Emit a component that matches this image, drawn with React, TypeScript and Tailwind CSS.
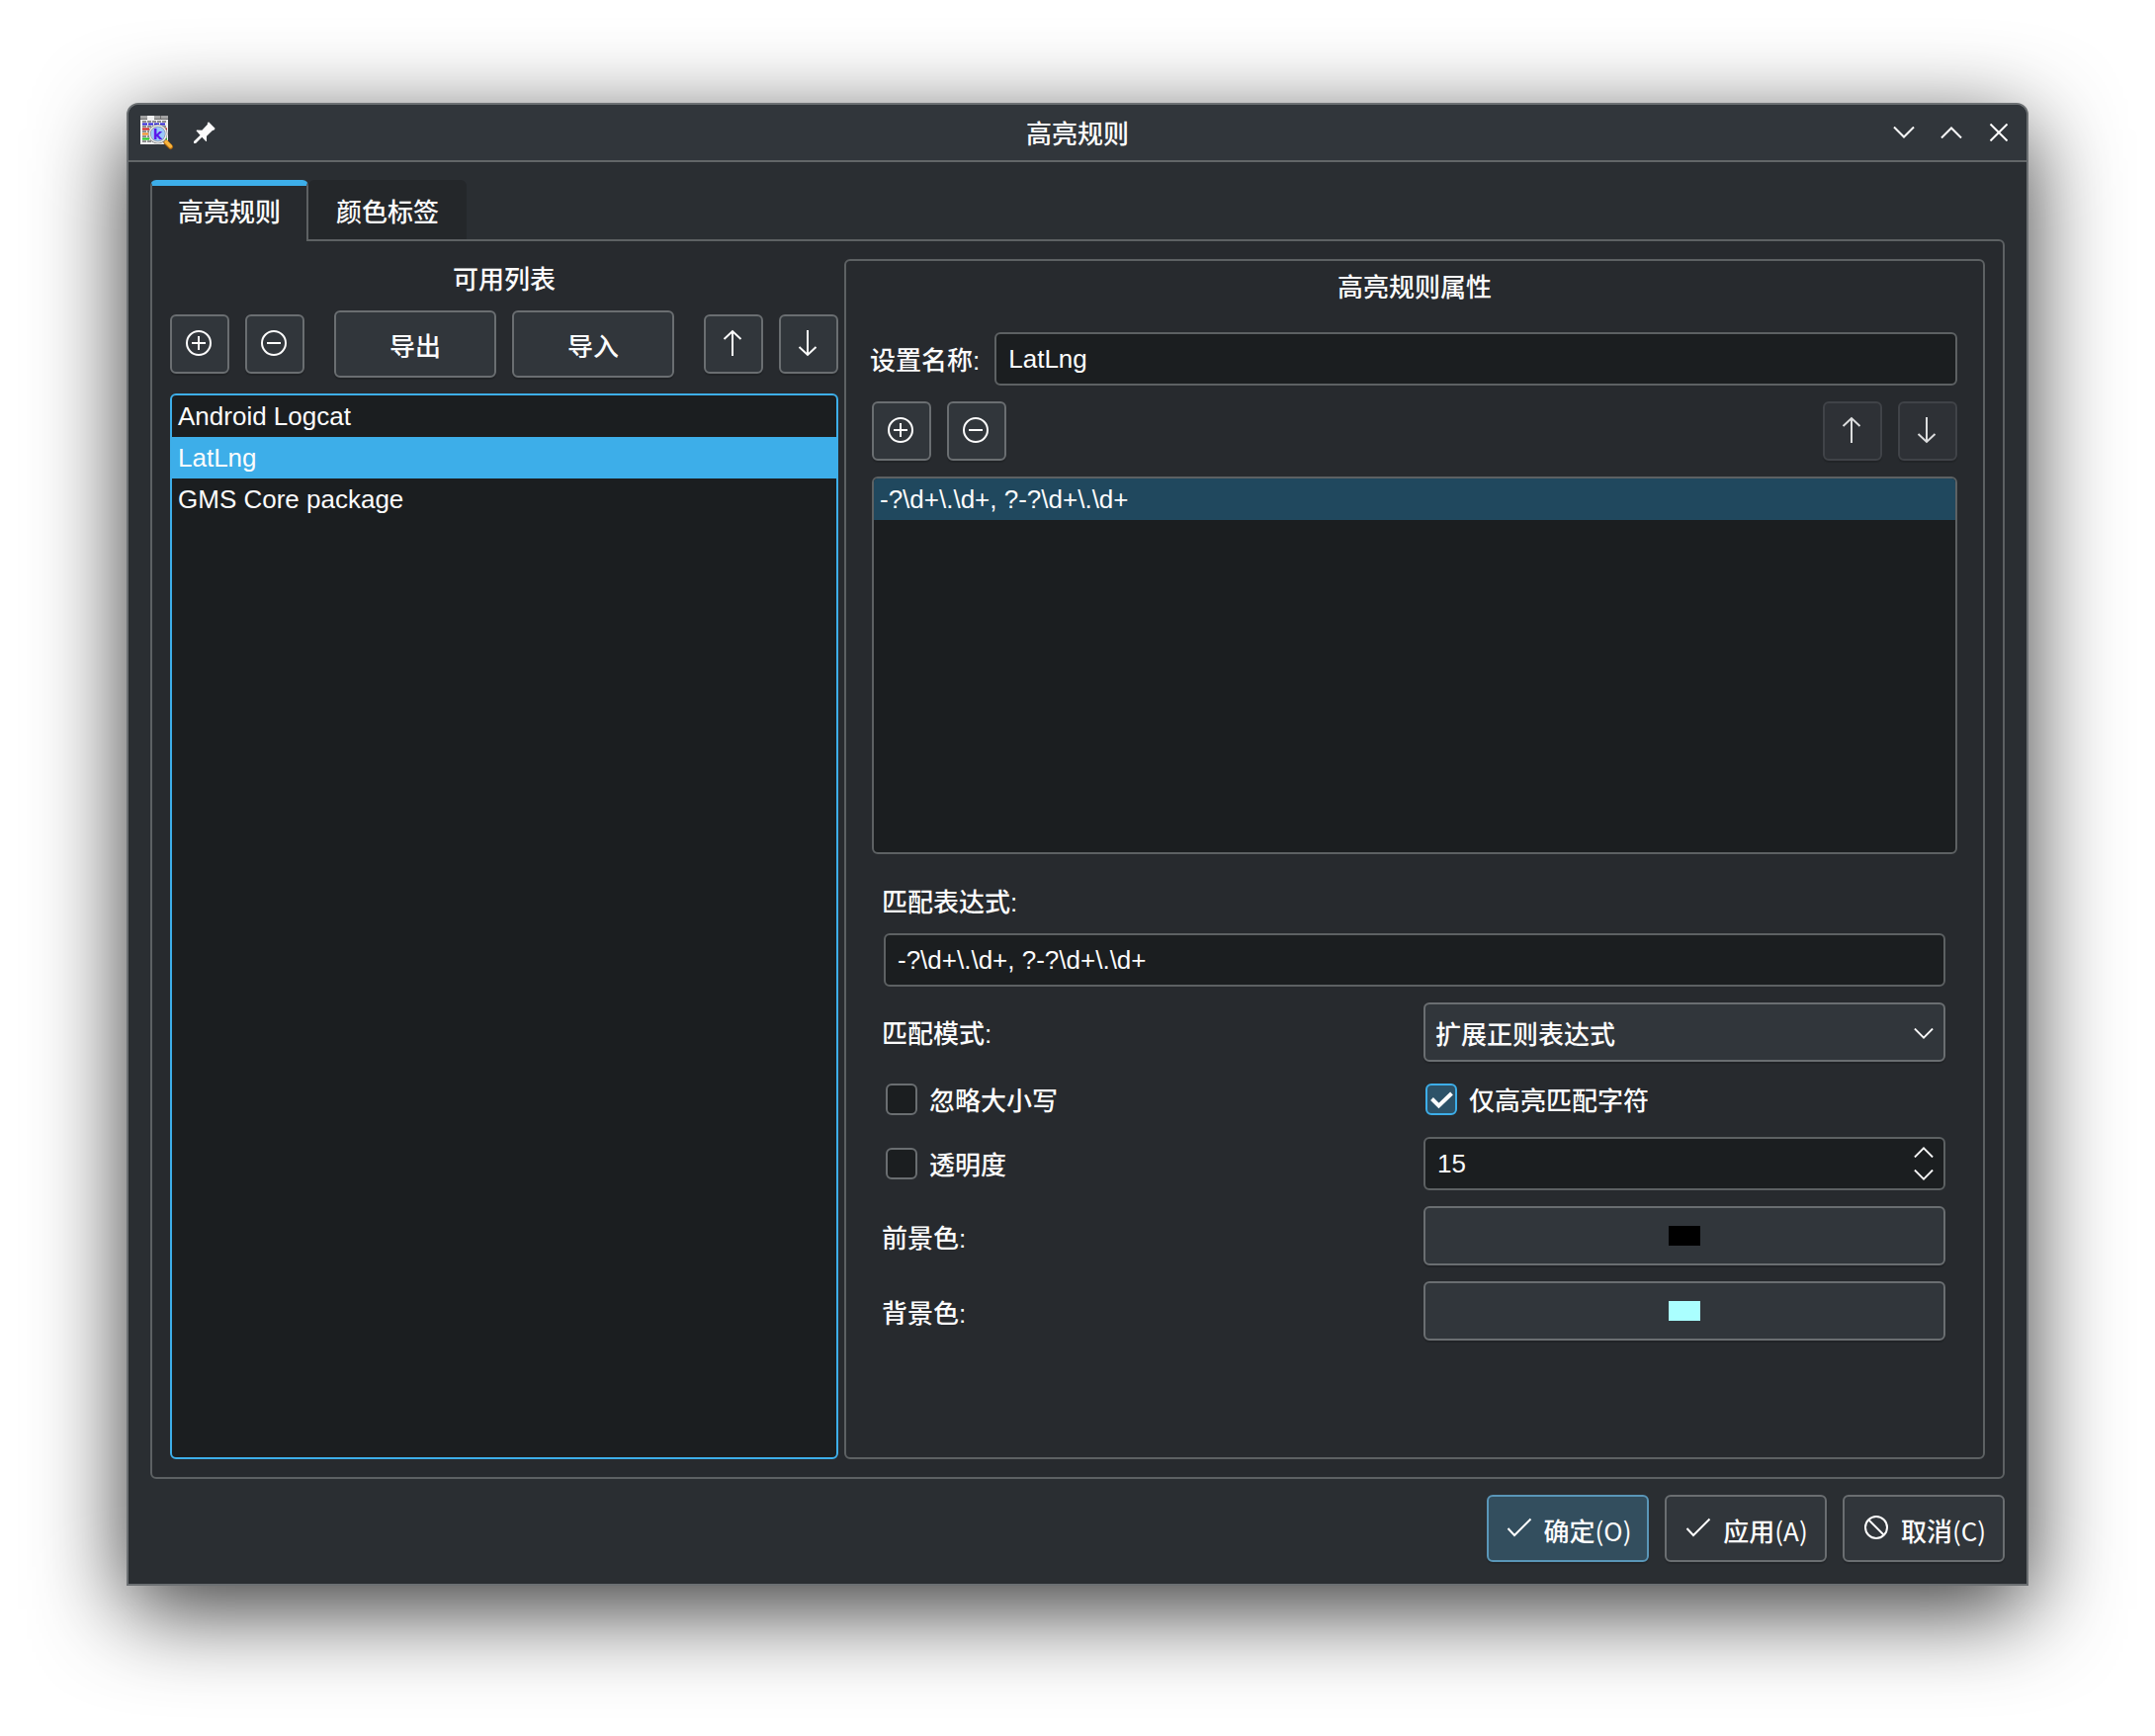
import { useState, type ReactNode } from "react";

const sets = ["Android Logcat", "LatLng", "GMS Core package"];
const pattern = "-?\\d+\\.\\d+, ?-?\\d+\\.\\d+";

type BtnProps = {
  children: ReactNode;
  label?: string;
  disabled?: boolean;
  onClick?: () => void;
};

const btnBase =
  "flex items-center justify-center rounded-md border-2 shadow-[0_2px_1px_rgba(0,0,0,0.15)]";

const IconButton = ({ children, label, disabled, onClick }: BtnProps) => (
  <button
    type="button"
    aria-label={label}
    disabled={disabled}
    onClick={onClick}
    className={`${btnBase} size-[60px] shrink-0 ${
      disabled
        ? "border-[#404348] bg-[#2e3136] text-[#dcddde]"
        : "border-[#6a6e71] bg-[#31363b] text-[#fcfcfc]"
    }`}
  >
    {children}
  </button>
);

const TextButton = ({ children, onClick }: BtnProps) => (
  <button
    type="button"
    onClick={onClick}
    className={`${btnBase} h-[68px] w-[164px] border-[#6a6e71] bg-[#31363b] pt-1.5`}
  >
    {children}
  </button>
);

const svgProps = {
  width: 32,
  height: 32,
  viewBox: "0 0 32 32",
  fill: "none",
  stroke: "currentColor",
  strokeWidth: 2,
  "aria-hidden": true,
};

const PlusIcon = () => (
  <svg {...svgProps}>
    <circle cx="15" cy="15" r="12" />
    <path d="M15 8v14M8 15h14" />
  </svg>
);

const MinusIcon = () => (
  <svg {...svgProps}>
    <circle cx="15" cy="15" r="12" />
    <path d="M8 15h14" />
  </svg>
);

const UpIcon = () => (
  <svg {...svgProps}>
    <path d="M15 28V3M6.500 11L15 3l8.500 8" />
  </svg>
);

const DownIcon = () => (
  <svg {...svgProps}>
    <path d="M15 2v25M6.500 19L15 27l8.500-8" />
  </svg>
);

const CheckIcon = () => (
  <svg {...svgProps}>
    <path d="M3.500 18l6.500 7L26.500 8.500" />
  </svg>
);

const CancelIcon = () => (
  <svg {...svgProps}>
    <circle cx="15" cy="17" r="11" />
    <path d="M7 9l16 16" />
  </svg>
);

const Chevron = ({ up = false, small = false }: { up?: boolean; small?: boolean }) => (
  <svg
    width={small ? 20 : 22}
    height={small ? 11 : 12}
    viewBox="0 0 22 12"
    fill="none"
    stroke="currentColor"
    strokeWidth="2"
    aria-hidden
  >
    <path d={up ? "M1 11.500L11 1.500l10 10" : "M1 0.500l10 10 10-10"} />
  </svg>
);

const AppIcon = () => (
  <svg width="36" height="36" viewBox="0 0 36 36" aria-hidden>
    <rect x="2" y="1" width="28" height="29" fill="#f1f1f1" />
    <path d="M2 1h7v4H2zM16 1h14v4H16z" fill="#a3a3a3" />
    <path d="M2 4.500h7M16 4.500h14M22.500 1v4" stroke="#6d6d6d" />
    <path
      d="M4 7h24M4 12h24M4 17h24M4 22h24M4 27h24"
      stroke="#6f6f6f"
      strokeWidth="1.500"
      strokeDasharray="4 1"
    />
    <path d="M4 9.500h24" stroke="#2b1fd6" strokeWidth="2" strokeDasharray="5 1" />
    <path d="M4 14.500h7M26 14.500h3" stroke="#d01818" strokeWidth="2" />
    <path d="M4 19.500h6" stroke="#f08a1c" strokeWidth="2" />
    <path d="M4 24.500h7M26 24.500h3" stroke="#18c81e" strokeWidth="2" />
    <path d="M28 28l4.500 4.500" stroke="#a8620c" strokeWidth="5" strokeLinecap="round" />
    <path d="M28 27.500l4.500 4.500" stroke="#f9b43c" strokeWidth="3.500" strokeLinecap="round" />
    <circle cx="19.700" cy="19.500" r="8.500" fill="#9cc9fa" stroke="#7c7c7c" strokeWidth="2.500" />
    <circle cx="19.700" cy="19.500" r="8.500" fill="none" stroke="#ececec" strokeWidth="1.500" />
    <text
      x="19.500"
      y="25"
      textAnchor="middle"
      fontFamily="DejaVu Sans"
      fontSize="14"
      fontWeight="700"
      fill="#5a17e8"
    >
      k
    </text>
  </svg>
);

const PinIcon = () => (
  <svg width="24" height="24" viewBox="0 -1 24 24" fill="#fcfcfc" aria-hidden>
    <path d="M15 .3L21.700 7 20 9l-.8-.2L13 14.700V20h-.7l-4-4.200L2 22H0v-2l6.500-6.200L2.500 9.200l.6-.7 5.200.2L14 2.800l-.3-1z" />
  </svg>
);

const Swatch = ({ id, color, onClick }: { id: string; color: string; onClick?: () => void }) => (
  <button
    id={id}
    type="button"
    onClick={onClick}
    className={`${btnBase} h-[60px] border-[#6a6e71] bg-[#31363b]`}
  >
    <span className="h-5 w-8" style={{ backgroundColor: color }} />
  </button>
);

type CheckProps = { label: string; checked: boolean; onChange: (v: boolean) => void };

const Check = ({ label, checked, onChange }: CheckProps) => (
  <label className="flex h-11 items-center gap-3 px-0.5">
    <span className="relative flex size-8">
      <input
        type="checkbox"
        checked={checked}
        onChange={(e) => onChange(e.target.checked)}
        className="size-8 appearance-none rounded-md border-2 border-[#6a6e71] bg-[#1b1e20] checked:border-[#3daee9] checked:bg-[#2d5268]"
      />
      {checked && (
        <svg
          className="pointer-events-none absolute inset-0"
          viewBox="0 0 32 32"
          fill="none"
          stroke="#fcfcfc"
          strokeWidth="4"
          aria-hidden
        >
          <path d="M6.500 15.500l7 7L26.500 10" />
        </svg>
      )}
    </span>
    <span className="pt-1">{label}</span>
  </label>
);

const App = () => {
  const [tab, setTab] = useState(0);
  const [selected, setSelected] = useState(1);
  const [name, setName] = useState("LatLng");
  const [expr, setExpr] = useState(pattern);
  const [ignoreCase, setIgnoreCase] = useState(false);
  const [onlyMatch, setOnlyMatch] = useState(true);
  const [opacity, setOpacity] = useState(false);
  const [level, setLevel] = useState(15);

  const field = "rounded-md border-2 border-[#5d6163] bg-[#1b1e20] outline-none";

  return (
    <div className="flex min-h-screen flex-col bg-white px-32 pt-[104px] pb-[152px] font-['Liberation_Sans','Noto_Sans_CJK_SC',sans-serif] text-[26px] leading-[38px] font-medium text-[#fcfcfc]">
      <main className="flex flex-1 flex-col rounded-t-xl border-2 border-[#6c7073] bg-[#2a2e32] shadow-[0_24px_92px_rgba(0,0,0,0.78)]">
        <header className="grid h-[58px] grid-cols-[1fr_auto_1fr] items-center rounded-t-[10px] border-b-2 border-[#626668] bg-[#31363b]">
          <div className="flex items-center gap-5 pl-2.5">
            <AppIcon />
            <button type="button" aria-label="置顶">
              <PinIcon />
            </button>
          </div>
          <h1 className="pt-1">高亮规则</h1>
          <div className="flex items-center justify-end gap-[26px] pr-[19px]">
            <button type="button" aria-label="最小化">
              <Chevron />
            </button>
            <button type="button" aria-label="最大化">
              <Chevron up />
            </button>
            <button type="button" aria-label="关闭" className="pl-0.5">
              <svg width="18" height="18" viewBox="0 0 18 18" stroke="currentColor" strokeWidth="2" aria-hidden>
                <path d="M0.500 0.500l17 17M17.500 0.500l-17 17" />
              </svg>
            </button>
          </div>
        </header>

        <div className="flex flex-1 flex-col px-[22px] pt-[18px] pb-[22px]">
          <div role="tablist" className="flex">
            {["高亮规则", "颜色标签"].map((t, i) => (
              <button
                key={t}
                type="button"
                role="tab"
                aria-selected={tab === i}
                onClick={() => setTab(i)}
                className={
                  tab === i
                    ? "relative z-10 -mb-0.5 h-[62px] w-40 rounded-t-md border-x-2 border-t-[6px] border-x-[#5d6163] border-t-[#3daee9] bg-[#272a2e] pb-0.5"
                    : "h-[60px] w-40 rounded-t-md bg-[#24272a] pt-1.5"
                }
              >
                {t}
              </button>
            ))}
          </div>

          <div className="flex flex-1 gap-1.5 rounded-b-md rounded-tr-md border-2 border-[#5d6163] bg-[#272a2e] p-[18px]">
            <section className="flex w-[676px] flex-col">
              <h2 className="pt-0.5 text-center">可用列表</h2>
              <div className="mt-3 flex items-center justify-between">
                <div className="flex gap-4">
                  <IconButton label="添加"><PlusIcon /></IconButton>
                  <IconButton label="删除"><MinusIcon /></IconButton>
                </div>
                <div className="flex gap-4">
                  <TextButton>导出</TextButton>
                  <TextButton>导入</TextButton>
                </div>
                <div className="flex gap-4">
                  <IconButton label="上移"><UpIcon /></IconButton>
                  <IconButton label="下移"><DownIcon /></IconButton>
                </div>
              </div>
              <ul className="mt-4 flex-1 overflow-hidden rounded-md border-2 border-[#3daee9] bg-[#1b1e20]">
                {sets.map((s, i) => (
                  <li key={s}>
                    <button
                      type="button"
                      onClick={() => setSelected(i)}
                      className={`block h-[42px] w-full px-1.5 text-left ${selected === i ? "bg-[#3daee9]" : ""}`}
                    >
                      {s}
                    </button>
                  </li>
                ))}
              </ul>
            </section>

            <section className="flex flex-1 flex-col rounded-md border-2 border-[#5d6163] px-[26px]">
              <h2 className="mt-2 text-center">高亮规则属性</h2>
              <div className="mt-[26px] flex items-center gap-[15px]">
                <label htmlFor="set-name" className="-ml-0.5 pt-1">设置名称:</label>
                <input
                  id="set-name"
                  value={name}
                  onChange={(e) => setName(e.target.value)}
                  className={`${field} h-[54px] min-w-0 flex-1 px-3`}
                />
              </div>
              <div className="mt-4 flex gap-4">
                <IconButton label="添加表达式"><PlusIcon /></IconButton>
                <IconButton label="删除表达式"><MinusIcon /></IconButton>
                <div className="flex-1" />
                <IconButton label="上移表达式" disabled><UpIcon /></IconButton>
                <IconButton label="下移表达式" disabled><DownIcon /></IconButton>
              </div>
              <ul className={`${field} mt-4 h-[382px] overflow-hidden`}>
                <li className="h-[42px] bg-[#20485e] px-1.5 leading-[42px]">{pattern}</li>
              </ul>

              <div className="mt-[30px] flex flex-col px-3">
                <label htmlFor="expr" className="-ml-0.5">匹配表达式:</label>
                <input
                  id="expr"
                  value={expr}
                  onChange={(e) => setExpr(e.target.value)}
                  className={`${field} mt-3 h-[54px] px-3`}
                />
              </div>

              <div className="mt-4 grid grid-cols-2 items-center gap-x-[18px] gap-y-4 px-3">
                <label htmlFor="mode" className="-ml-0.5 pt-1">匹配模式:</label>
                <div className="relative">
                  <select
                    id="mode"
                    className="block h-[60px] w-full appearance-none rounded-md border-2 border-[#6a6e71] bg-[#31363b] px-2.5 pt-1.5 shadow-[0_2px_1px_rgba(0,0,0,0.15)]"
                  >
                    <option>扩展正则表达式</option>
                  </select>
                  <span className="pointer-events-none absolute inset-y-0 right-3 flex items-center pt-0.5">
                    <Chevron small />
                  </span>
                </div>

                <Check label="忽略大小写" checked={ignoreCase} onChange={setIgnoreCase} />
                <Check label="仅高亮匹配字符" checked={onlyMatch} onChange={setOnlyMatch} />

                <Check label="透明度" checked={opacity} onChange={setOpacity} />
                <div className={`${field} flex h-[54px] items-center pr-2.5`}>
                  <input
                    aria-label="透明度"
                    inputMode="numeric"
                    value={level}
                    onChange={(e) => setLevel(Number(e.target.value) || 0)}
                    className="min-w-0 flex-1 bg-transparent px-3 outline-none"
                  />
                  <div className="flex flex-col gap-3">
                    <button type="button" aria-label="增加" onClick={() => setLevel(level + 1)}>
                      <Chevron up small />
                    </button>
                    <button type="button" aria-label="减少" onClick={() => setLevel(level - 1)}>
                      <Chevron small />
                    </button>
                  </div>
                </div>

                <label htmlFor="fg" className="-ml-0.5 pt-1.5">前景色:</label>
                <Swatch id="fg" color="#000000" />
                <label htmlFor="bg" className="-ml-0.5 pt-1.5">背景色:</label>
                <Swatch id="bg" color="#aaffff" />
              </div>
            </section>
          </div>

          <footer className="mt-4 flex justify-end gap-4 font-['Noto_Sans_CJK_SC',sans-serif]">
            <button type="button" className={`${btnBase} h-[68px] w-[164px] gap-2 border-[#5a96b8] bg-[#334e5e]`}>
              <span className="pb-1"><CheckIcon /></span>
              <span className="pt-1">确定<span className="font-normal">(O)</span></span>
            </button>
            <button type="button" className={`${btnBase} h-[68px] w-[164px] gap-2 border-[#6a6e71] bg-[#31363b]`}>
              <span className="pb-1"><CheckIcon /></span>
              <span className="pt-1">应用<span className="font-normal">(A)</span></span>
            </button>
            <button type="button" className={`${btnBase} h-[68px] w-[164px] gap-2 border-[#6a6e71] bg-[#31363b]`}>
              <span className="pb-1"><CancelIcon /></span>
              <span className="pt-1">取消<span className="font-normal">(C)</span></span>
            </button>
          </footer>
        </div>
      </main>
    </div>
  );
};

export default App;
